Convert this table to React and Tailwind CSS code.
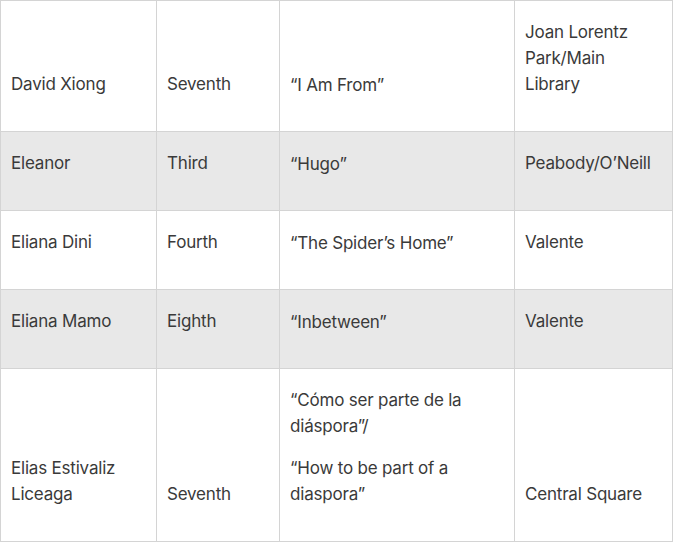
const rows = [
  { name: ['David Xiong'], grade: 'Seventh', title: [['“I Am From”']], branch: 'Joan Lorentz Park/Main Library', bg: 'bg-white' },
  { name: ['Eleanor'], grade: 'Third', title: [['“Hugo”']], branch: 'Peabody/O’Neill', bg: 'bg-[#e8e8e8]' },
  { name: ['Eliana Dini'], grade: 'Fourth', title: [['“The Spider’s Home”']], branch: 'Valente', bg: 'bg-white' },
  { name: ['Eliana Mamo'], grade: 'Eighth', title: [['“Inbetween”']], branch: 'Valente', bg: 'bg-[#e8e8e8]' },
  {
    name: ['Elias Estivaliz Liceaga'],
    grade: 'Seventh',
    title: [['“Cómo ser parte de la diáspora”/'], ['“How to be part of a diaspora”']],
    branch: 'Central Square',
    bg: 'bg-white',
  },
];

const cell = 'border border-[#d4d4d4] align-bottom pl-[10px] pr-[10px] pt-[18px] pb-[17px]';

export default function App() {
  return (
    <div className="bg-white min-h-screen">
      <table className="border-collapse table-fixed w-[672px] text-[17px] leading-[26px] text-[#3a3a3a] font-['Inter','Liberation_Sans',sans-serif] tracking-[-0.2px]">
        <colgroup>
          <col className="w-[156px]" />
          <col className="w-[123px]" />
          <col className="w-[235px]" />
          <col className="w-[158px]" />
        </colgroup>
        <tbody>
          {rows.map((r, i) => (
            <tr key={i} className={r.bg}>
              <td className={cell}>
                <p className="mb-[17px]">{r.name}</p>
              </td>
              <td className={cell}>
                <p className="mb-[17px]">{r.grade}</p>
              </td>
              <td className={cell}>
                {r.title.map((t, j) => (
                  <p key={j} className={j === 0 ? 'mb-[16px]' : 'mb-[17px]'}>{t}</p>
                ))}
              </td>
              <td className={cell}>
                <p className="mb-[17px]">{r.branch}</p>
              </td>
            </tr>
          ))}
        </tbody>
      </table>
    </div>
  );
}
